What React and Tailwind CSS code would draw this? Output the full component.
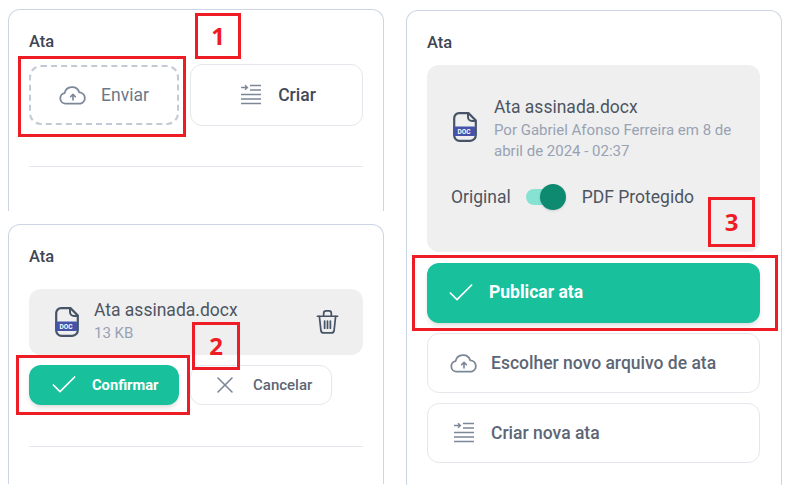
import React from 'react';
import { Check, X } from 'lucide-react';

function CloudIcon({ className }) {
  return (
    <svg viewBox="0 0 28 20" fill="none" className={className} stroke="#7b8797" strokeWidth="1.8" strokeLinecap="round" strokeLinejoin="round">
      <path d="M7 18.6H6.4A5.3 5.3 0 0 1 5.6 8.1 7.6 7.6 0 0 1 20.3 7.4 5.7 5.7 0 0 1 21.6 18.6Z" />
      <path d="M14 15V9.6M11.6 11.8 14 9.4l2.4 2.4" strokeWidth="1.6" />
    </svg>
  );
}

function IndentIcon({ className }) {
  return (
    <svg viewBox="0 0 22 22" fill="none" className={className} stroke="#7b8797" strokeWidth="1.6">
      <path d="M1 3.5h6M5 1.2l2.4 2.3L5 5.8" strokeWidth="1.4" />
      <path d="M10 1.5h11M10 6h11M1 10.5h20M1 15h20M1 19.5h20" />
    </svg>
  );
}

function DocIcon() {
  return (
    <svg viewBox="0 0 24 30" className="w-6 h-[30px] shrink-0" fill="none">
      <path d="M6 1.2h9.5l7.3 7.3V23a5.5 5.5 0 0 1-5.5 5.8H6.5A5.3 5.3 0 0 1 1.2 23.5V6A4.8 4.8 0 0 1 6 1.2Z" stroke="#475467" strokeWidth="2.2" />
      <path d="M15 1.5V5a4 4 0 0 0 4 4h3.5" stroke="#475467" strokeWidth="2" />
      <rect x="0" y="14.5" width="22" height="9.5" rx="1" fill="#4353a8" />
      <text x="11" y="22" textAnchor="middle" fontSize="6.6" fontWeight="700" fill="#fff" fontFamily="Roboto, sans-serif">DOC</text>
    </svg>
  );
}

function TrashIcon() {
  return (
    <svg viewBox="0 0 24 26" fill="none" className="w-[23px] h-[26px]" stroke="#475467" strokeWidth="1.8" strokeLinecap="round" strokeLinejoin="round">
      <path d="M1.5 7h21M8 7V4a2.5 2.5 0 0 1 2.5-2.5h3A2.5 2.5 0 0 1 16 4v3" />
      <path d="M3.5 7l1.6 14.5a3 3 0 0 0 3 2.9h7.8a3 3 0 0 0 3-2.9L20.5 7" />
      <path d="M9 12v7.5M12 12v7.5M15 12v7.5" />
    </svg>
  );
}

function RedBox({ className, label }) {
  return (
    <div className={`absolute border-[3px] border-[#ee1c25] flex items-center justify-center text-[#ee1c25] text-[24px] font-bold font-['Open_Sans',sans-serif] ${className}`}>
      {label}
    </div>
  );
}

function WideButton({ icon, label }) {
  return (
    <div className="h-[60px] rounded-xl border border-[#e4e7ec] bg-white flex items-center pl-[22px] gap-[13px] text-[17.5px] font-medium text-[#5d6675]">
      {icon}
      <span>{label}</span>
    </div>
  );
}

function App() {
  return (
    <div className="relative w-[788px] h-[492px] bg-white font-['Roboto',sans-serif] overflow-hidden flex pl-2 pt-[9px] gap-[22px]">
      <div className="w-[376px] flex flex-col gap-[13px]">
        {/* painel 1 */}
        <div className="h-[202px] border border-b-0 border-[#ccd5e3] rounded-t-xl px-5 pt-[22px]">
          <h3 className="text-[16.5px] leading-5 font-medium text-[#3f4654]">Ata</h3>
          <div className="flex gap-[11px] mt-[12px] h-[62px] items-center">
            <div className="w-[150px] h-[60px] rounded-xl border-2 border-dashed border-[#c3cad5] flex items-center justify-center gap-[14px] text-[17.5px] text-[#6d7787]">
              <CloudIcon className="w-7 h-5" />
              <span>Enviar</span>
            </div>
            <div className="w-[173px] h-[62px] rounded-xl border border-[#e4e7ec] flex items-center justify-center gap-4 pl-[3px] text-[17.5px] font-medium text-[#414a5a]">
              <IndentIcon className="w-[22px] h-[22px]" />
              <span>Criar</span>
            </div>
          </div>
          <div className="mt-10 border-t border-[#e4e7ec]" />
        </div>

        {/* painel 2 */}
        <div className="h-[260px] border border-b-0 border-[#ccd5e3] rounded-t-xl px-5 pt-[22px]">
          <h3 className="text-[16.5px] leading-5 font-medium text-[#3f4654]">Ata</h3>
          <div className="mt-[22px] h-[66px] rounded-xl bg-[#efefef] flex items-center pl-[26px] pr-[24px]">
            <DocIcon />
            <div className="ml-[15px] flex-1">
              <div className="text-[17.5px] leading-5 text-[#4d5562]">Ata assinada.docx</div>
              <div className="text-[15px] leading-[24px] mt-px text-[#98a2b3]">13 KB</div>
            </div>
            <TrashIcon />
          </div>
          <div className="flex gap-[11px] mt-[10px]">
            <div className="w-[150px] h-10 rounded-xl bg-[#18c09c] shadow-md flex items-center pl-[19px] gap-3 text-[14.7px] font-bold text-white">
              <Check className="w-8 h-8 shrink-0" strokeWidth={1.25} />
              <span>Confirmar</span>
            </div>
            <div className="w-[142px] h-10 rounded-xl border border-[#e4e7ec] flex items-center pl-[20px] gap-[14px] text-[15px] font-medium text-[#5d6675]">
              <X className="w-7 h-7 shrink-0 text-[#7b8797]" strokeWidth={1.3} />
              <span>Cancelar</span>
            </div>
          </div>
          <div className="mt-[41px] border-t border-[#e4e7ec]" />
        </div>
      </div>

      {/* painel 3 */}
      <div className="w-[376px] h-[475px] mt-px border border-b-0 border-[#ccd5e3] rounded-t-xl pl-5 pr-[21px] pt-[22px]">
        <h3 className="text-[16.5px] leading-5 font-medium text-[#3f4654]">Ata</h3>
        <div className="mt-[12px] h-[187px] rounded-xl bg-[#efefef] pl-6 pr-4 pt-[32px]">
          <div className="flex items-start">
            <div className="pl-[2px] pt-[15px]">
              <DocIcon />
            </div>
            <div className="ml-[17px]">
              <div className="text-[17.5px] leading-5 text-[#4d5562]">Ata assinada.docx</div>
              <div className="text-[15px] leading-[21px] text-[#98a2b3] mt-[3px] w-[250px]">Por Gabriel Afonso Ferreira em 8 de abril de 2024 - 02:37</div>
            </div>
          </div>
          <div className="flex items-center mt-[22px] text-[17.5px] text-[#4d5562]">
            <span>Original</span>
            <div className="relative ml-[15px] w-[38px] h-4 rounded-full bg-[#86e2d2]">
              <div className="absolute -right-[2px] -top-[5px] w-[26px] h-[26px] rounded-full bg-[#0e8a70] shadow" />
            </div>
            <span className="ml-[18px]">PDF Protegido</span>
          </div>
        </div>
        <div className="mt-[11px] flex flex-col gap-[10px]">
          <div className="h-[60px] rounded-xl bg-[#18c09c] shadow-md flex items-center pl-[18px] gap-3 text-[17.5px] font-bold text-white">
            <Check className="w-8 h-8 shrink-0" strokeWidth={1.25} />
            <span className="-mt-[2px]">Publicar ata</span>
          </div>
          <WideButton icon={<CloudIcon className="w-7 h-5" />} label="Escolher novo arquivo de ata" />
          <WideButton icon={<IndentIcon className="w-[22px] h-[22px] mx-[3px]" />} label="Criar nova ata" />
        </div>
      </div>

      {/* marcações */}
      <RedBox className="left-[195px] top-[13px] w-[46px] h-[46px]" label="1" />
      <RedBox className="left-[18px] top-[56px] w-[168px] h-[81px]" />
      <RedBox className="left-[192px] top-[322px] w-[48px] h-[48px]" label="2" />
      <RedBox className="left-[16px] top-[355px] w-[174px] h-[60px]" />
      <RedBox className="left-[708px] top-[197px] w-[47px] h-[50px]" label="3" />
      <RedBox className="left-[412px] top-[255px] w-[366px] h-[76px]" />
    </div>
  );
}

export default App;
